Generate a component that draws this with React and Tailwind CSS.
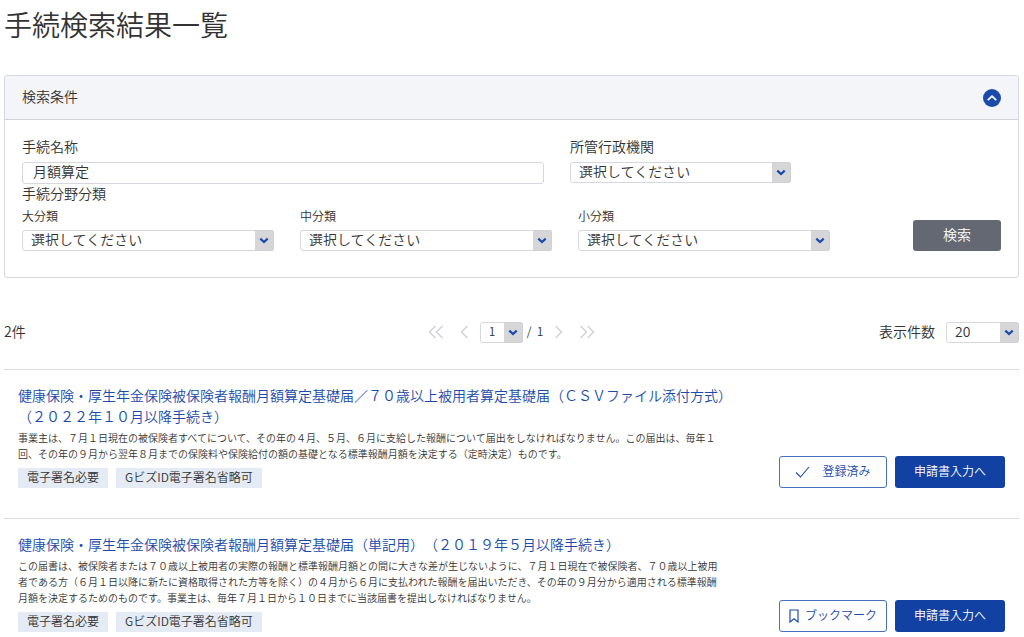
const results = [
  {
    id: 1,
    title: '健康保険・厚生年金保険被保険者報酬月額算定基礎届／７０歳以上被用者算定基礎届（ＣＳＶファイル添付方式）（２０２２年１０月以降手続き）',
    description:
      '事業主は、７月１日現在の被保険者すべてについて、その年の４月、５月、６月に支給した報酬について届出をしなければなりません。この届出は、毎年１回、その年の９月から翌年８月までの保険料や保険給付の額の基礎となる標準報酬月額を決定する（定時決定）ものです。',
    tags: ['電子署名必要', 'GビズID電子署名省略可'],
    bookmarked: true,
  },
  {
    id: 2,
    title: '健康保険・厚生年金保険被保険者報酬月額算定基礎届（単記用）（２０１９年５月以降手続き）',
    description:
      'この届書は、被保険者または７０歳以上被用者の実際の報酬と標準報酬月額との間に大きな差が生じないように、７月１日現在で被保険者、７０歳以上被用者である方（６月１日以降に新たに資格取得された方等を除く）の４月から６月に支払われた報酬を届出いただき、その年の９月分から適用される標準報酬月額を決定するためのものです。事業主は、毎年７月１日から１０日までに当該届書を提出しなければなりません。',
    tags: ['電子署名必要', 'GビズID電子署名省略可'],
    bookmarked: false,
  },
]

const categories = [
  { id: 'large', label: '大分類' },
  { id: 'middle', label: '中分類' },
  { id: 'small', label: '小分類' },
]

function Icon({ width, height, d, strokeWidth }) {
  return (
    <svg width={width} height={height} viewBox={`0 0 ${width} ${height}`} fill="none" stroke="currentColor" strokeWidth={strokeWidth} aria-hidden="true">
      <path d={d} />
    </svg>
  )
}

function Select({ className, textClass = 'text-sm', options = ['選択してください'], ...props }) {
  return (
    <div className={`relative h-[21px] ${className}`}>
      <select
        className={`block h-full w-full appearance-none rounded-[3px] border border-[#d5d6e0] bg-white pb-[3px] pl-2 leading-none ${textClass}`}
        {...props}
      >
        {options.map((option) => (
          <option key={option}>{option}</option>
        ))}
      </select>
      {/* Grey arrow box */}
      <span className="pointer-events-none absolute inset-y-0 right-0 flex w-[19px] items-center justify-center rounded-r-[3px] border border-l-0 border-[#cfd0d8] bg-[#d6d6d8] text-[#1a4bab]">
        <Icon width={10} height={7} d="M1.3 1.6 5 5 8.7 1.6" strokeWidth={2.2} />
      </span>
    </div>
  )
}

function SearchPanel() {
  return (
    <section className="mt-7 rounded-[3px] border border-[#d5d6de]">
      <div className="flex h-11 items-center justify-between rounded-t-[3px] border-b border-[#d0d1d8] bg-[#f4f5f8] px-[17px]">
        <h2 className="pb-1 text-sm">検索条件</h2>
        <button type="button" aria-label="検索条件を閉じる" className="flex size-[18px] items-center justify-center rounded-full bg-[#1a4bab] text-white">
          <Icon width={12} height={8} d="M1.8 6.2 6 2.2 10.2 6.2" strokeWidth={1.8} />
        </button>
      </div>

      <form className="px-[17px] pt-[15px] pb-[26px]">
        <div className="flex gap-[26px]">
          <div className="flex w-[522px] flex-col gap-[5px]">
            <label htmlFor="name" className="text-sm leading-[22px]">手続名称</label>
            <input
              id="name"
              type="text"
              defaultValue="月額算定"
              className="h-[22px] w-full rounded-[3px] border border-[#d5d6e0] px-[10px] pb-1 text-sm leading-4"
            />
          </div>
          <div className="flex flex-col gap-[5px]">
            <label htmlFor="agency" className="text-sm leading-[22px]">所管行政機関</label>
            <Select id="agency" className="w-[221px]" />
          </div>
        </div>

        <div className="flex items-end justify-between">
          <fieldset>
            <legend className="text-sm leading-[18px]">手続分野分類</legend>
            <div className="mt-[6px] flex gap-[26px]">
              {categories.map((category) => (
                <div key={category.id} className="flex w-[252px] flex-col gap-[6px]">
                  <label htmlFor={category.id} className="text-xs leading-4">{category.label}</label>
                  <Select id={category.id} className="w-full" />
                </div>
              ))}
            </div>
          </fieldset>
          <button type="button" className="h-[31px] w-[88px] rounded-[3px] bg-[#636873] pb-[3px] text-sm text-white">検索</button>
        </div>
      </form>
    </section>
  )
}

function Pager() {
  return (
    <div className="mt-[42px] grid h-6 grid-cols-[1fr_auto_1fr] items-center text-sm">
      <p className="pb-[3px]">2件</p>
      <nav aria-label="ページ送り" className="flex items-center text-[#d3d4d8]">
        <button type="button" aria-label="最初のページ">
          <Icon width={16} height={14} d="M7.5 1 1.5 7 7.5 13M14.5 1 8.5 7 14.5 13" strokeWidth={1.6} />
        </button>
        <button type="button" aria-label="前のページ" className="ml-4">
          <Icon width={9} height={14} d="M7.5 1 1.5 7 7.5 13" strokeWidth={1.6} />
        </button>
        <Select aria-label="ページ" className="ml-[11px] w-[43px] text-[#333]" textClass="text-xs" options={['1']} />
        <span className="ml-1 pb-0.5 text-xs text-[#333]">/&nbsp;&nbsp;1</span>
        <button type="button" aria-label="次のページ" className="ml-[11px]">
          <Icon width={9} height={14} d="M1.5 1 7.5 7 1.5 13" strokeWidth={1.6} />
        </button>
        <button type="button" aria-label="最後のページ" className="ml-4">
          <Icon width={16} height={14} d="M1.5 1 7.5 7 1.5 13M8.5 1 14.5 7 8.5 13" strokeWidth={1.6} />
        </button>
      </nav>
      <div className="flex items-center justify-end gap-[11px]">
        <label htmlFor="per-page" className="pb-[3px]">表示件数</label>
        <Select id="per-page" className="w-[73px]" options={['20']} />
      </div>
    </div>
  )
}

function ResultItem({ item }) {
  return (
    <li className="flex items-end justify-between border-t border-[#d9dae2] px-[14px] pt-[15px] pb-[30px]">
      <div className="w-[724px]">
        <h3 className="text-sm leading-[21px]">
          <a href="#detail" className="text-[#1a4bab]">{item.title}</a>
        </h3>
        <p className="mt-[3px] w-[708px] text-[10px] leading-4">{item.description}</p>
        <ul className="mt-[6px] flex gap-2">
          {item.tags.map((tag) => (
            <li key={tag} className="h-5 bg-[#e5ebf5] px-[9px] text-xs leading-[18px]">{tag}</li>
          ))}
        </ul>
      </div>

      <div className="flex gap-2 text-xs">
        {item.bookmarked ? (
          <button type="button" className="flex h-8 w-[108px] items-center justify-center gap-3 rounded-[3px] border border-[#4a70bd] text-[#1a4bab]">
            <Icon width={15} height={12} d="M1 6.5 5.5 11 14 1" strokeWidth={1.1} />
            <span className="pb-0.5">登録済み</span>
          </button>
        ) : (
          <button type="button" className="flex h-8 w-[108px] items-center justify-center gap-[6px] rounded-[3px] border border-[#4a70bd] text-[#1a4bab]">
            <Icon width={10} height={14} d="M1 1H9V13L5 9.8 1 13Z" strokeWidth={1.2} />
            <span className="pb-0.5">ブックマーク</span>
          </button>
        )}
        <button type="button" className="h-8 w-[110px] rounded-[3px] bg-[#1141a2] pb-[3px] text-white">申請書入力へ</button>
      </div>
    </li>
  )
}

export default function App() {
  return (
    <main className="pr-[5px] pl-1 pt-1 font-['Noto_Sans_CJK_JP',sans-serif] font-[350] text-[#333] [text-spacing-trim:space-all]">
      <h1 className="pb-0.5 text-[28px] leading-[41px] font-[350]">手続検索結果一覧</h1>
      <SearchPanel />
      <Pager />
      <ul className="mt-[25px]">
        {results.map((item) => (
          <ResultItem key={item.id} item={item} />
        ))}
      </ul>
    </main>
  )
}
